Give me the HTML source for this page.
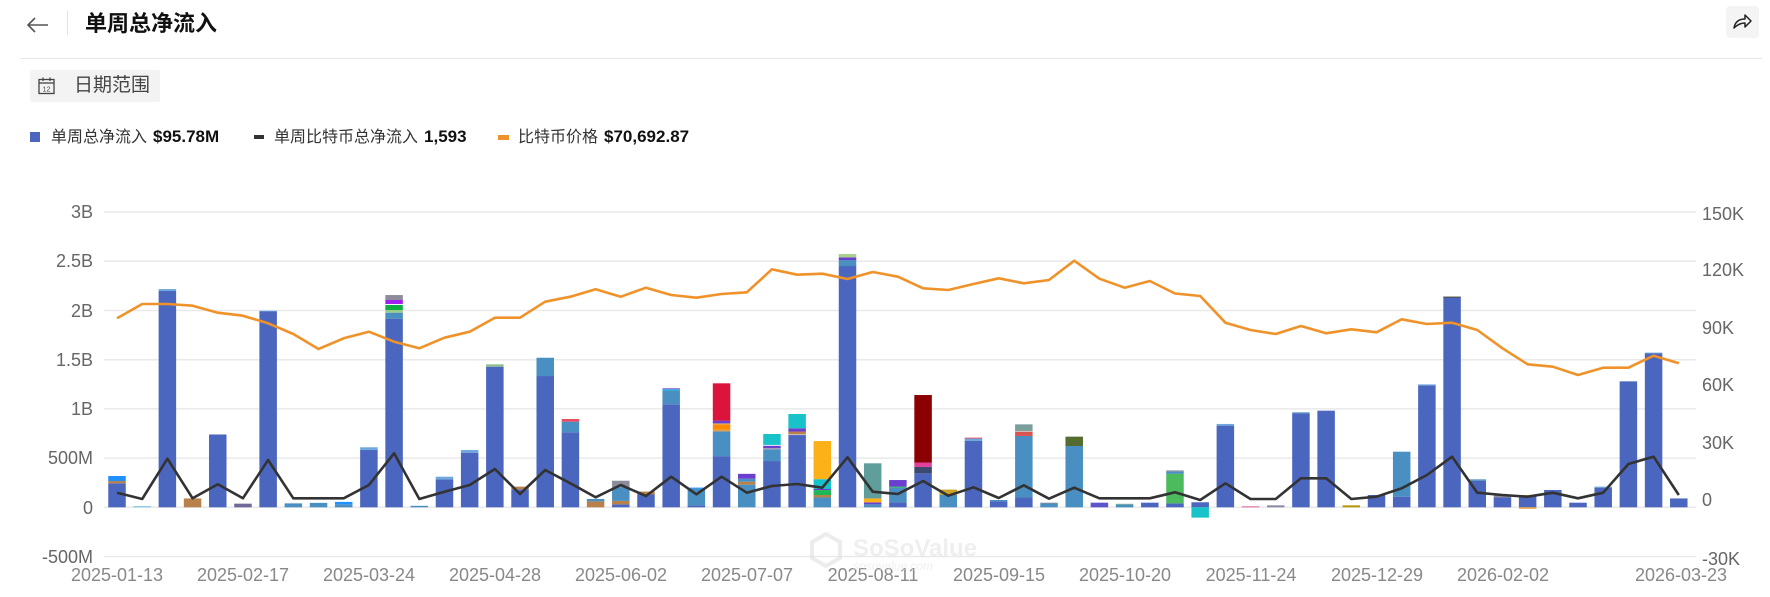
<!DOCTYPE html>
<html><head><meta charset="utf-8">
<style>
*{margin:0;padding:0;box-sizing:border-box}
body{width:1770px;height:597px;background:#fff;overflow:hidden;position:relative;font-family:"Liberation Sans","Noto Sans CJK SC",sans-serif;color:#222}
.abs{position:absolute}
.title{left:85px;top:8px;font-size:22px;font-weight:bold;color:#111;line-height:32px}
.hr{left:20px;top:58px;width:1742px;height:1px;background:#e6e6e6}
.btn{left:30px;top:70px;width:130px;height:32px;background:#f3f3f3;border-radius:2px}
.btn span{position:absolute;left:44px;top:5px;font-size:19px;color:#444;line-height:22px}
.share{left:1726px;top:6px;width:33px;height:32px;background:#f4f4f4;border-radius:4px}
.legend{top:126px;font-size:16px;line-height:22px;color:#333;white-space:nowrap}
.legend b{color:#111;font-size:17px;margin-left:6px}
.mk{position:absolute}
svg text{font-family:"Liberation Sans",sans-serif}
</style></head><body>
<svg class="abs" style="left:25px;top:14px" width="26" height="22" viewBox="0 0 26 22"><path d="M23 11H3M10 4L3 11L10 18" fill="none" stroke="#555" stroke-width="1.6"/></svg>
<div class="abs" style="left:67px;top:10px;width:1px;height:25px;background:#e3e3e3"></div>
<div class="abs title">单周总净流入</div>
<div class="abs share"><svg width="33" height="32" viewBox="0 0 33 32"><path d="M8 22C9 16 13 13 19 13V9L25 15L19 21V17C14 17 11 19 8 22Z" fill="none" stroke="#222" stroke-width="1.5" stroke-linejoin="round"/></svg></div>
<div class="abs hr"></div>
<div class="abs btn"><svg style="position:absolute;left:8px;top:7px" width="17" height="18" viewBox="0 0 17 18"><rect x="1" y="2.5" width="15" height="14" fill="none" stroke="#444" stroke-width="1.3"/><line x1="1" y1="6" x2="16" y2="6" stroke="#444" stroke-width="1.3"/><line x1="5" y1="0.5" x2="5" y2="4" stroke="#444" stroke-width="1.3"/><line x1="12" y1="0.5" x2="12" y2="4" stroke="#444" stroke-width="1.3"/><text x="8.5" y="14.5" font-size="7" text-anchor="middle" fill="#444">12</text></svg><span>日期范围</span></div>

<div class="abs legend" style="left:30px"><span class="mk" style="left:0;top:6px;width:10px;height:10px;background:#4b66be"></span><span style="margin-left:21px">单周总净流入</span><b>$95.78M</b></div>
<div class="abs legend" style="left:254px"><span class="mk" style="left:0;top:9px;width:10px;height:4px;background:#333"></span><span style="margin-left:20px">单周比特币总净流入</span><b>1,593</b></div>
<div class="abs legend" style="left:498px"><span class="mk" style="left:0;top:9px;width:11px;height:5px;background:#f0922a"></span><span style="margin-left:20px">比特币价格</span><b>$70,692.87</b></div>

<svg class="abs" style="left:0;top:0" width="1770" height="597" id="ch">
<g stroke="#e9e9e9" stroke-width="1.5">
<line x1="104" x2="1696" y1="212" y2="212"/><line x1="104" x2="1696" y1="261.2" y2="261.2"/><line x1="104" x2="1696" y1="310.5" y2="310.5"/><line x1="104" x2="1696" y1="359.7" y2="359.7"/><line x1="104" x2="1696" y1="408.9" y2="408.9"/><line x1="104" x2="1696" y1="458.1" y2="458.1"/><line x1="104" x2="1696" y1="507.3" y2="507.3"/><line x1="104" x2="1696" y1="556.5" y2="556.5"/>
</g>
<g font-size="18" fill="#666" text-anchor="end">
<text x="93" y="218">3B</text><text x="93" y="267">2.5B</text><text x="93" y="317">2B</text><text x="93" y="366">1.5B</text><text x="93" y="415">1B</text><text x="93" y="464">500M</text><text x="93" y="514">0</text><text x="93" y="563">-500M</text>
</g>
<g font-size="18" fill="#666">
<text x="1702" y="220">150K</text><text x="1702" y="276">120K</text><text x="1702" y="334">90K</text><text x="1702" y="391">60K</text><text x="1702" y="449">30K</text><text x="1702" y="506">0</text><text x="1702" y="565">-30K</text>
</g>
<g font-size="18" fill="#888" text-anchor="middle">
<text x="117" y="581">2025-01-13</text><text x="243" y="581">2025-02-17</text><text x="369" y="581">2025-03-24</text><text x="495" y="581">2025-04-28</text><text x="621" y="581">2025-06-02</text><text x="747" y="581">2025-07-07</text><text x="873" y="581">2025-08-11</text><text x="999" y="581">2025-09-15</text><text x="1125" y="581">2025-10-20</text><text x="1251" y="581">2025-11-24</text><text x="1377" y="581">2025-12-29</text><text x="1503" y="581">2026-02-02</text><text x="1681" y="581">2026-03-23</text>
</g>
<g id="bars"></g>
<g opacity="0.55">
<path d="M826 534L840 542V558L826 566L812 558V542Z" fill="none" stroke="#ddd" stroke-width="4"/>
<text x="853" y="556" font-size="24" font-weight="bold" fill="#e2e2e2">SoSoValue</text>
<text x="853" y="570" font-size="12" font-style="italic" fill="#e2e2e2">sosovalue.com</text>
</g>
<polyline id="pl" fill="none" stroke="#f0922a" stroke-width="2.6" stroke-linejoin="round"/>
<polyline id="bl" fill="none" stroke="#333" stroke-width="2.6" stroke-linejoin="round"/>
</svg>
<script>
var M='#4b66be',S='#4a8fc1',L='#6fa8dc',C='#17c3c8',P='#6a3fd0',R='#dc143c',O='#ff8c00',Y='#fbb117',G='#1db954',T='#b8804a',DR='#8b0000',TE='#5f9e9a',OL='#556b2f',GR='#8c8c9a',PK='#e0409a';
var D=[
[[.244,M],[.023,T],[.051,'#1e90ff']],[[.012,'#7ec8e3']],[[2.198,M],[.02,L]],[[.09,T]],[[.74,M]],[[.037,'#6f6a9a']],[[1.99,M],[.008,L]],[[.04,S]],[[.045,S]],[[.03,S],[.025,'#1e90ff']],
[[.582,M],[.028,L]],[[1.917,M],[.061,S],[.027,'#9acd8a'],[.051,'#0cb040'],[.01,'#fff'],[.041,'#a020f0'],[.05,GR]],[[.015,S]],[[.284,M],[.027,L]],[[.555,M],[.027,L]],[[1.429,M],[.024,'#8fbc8f']],[[.183,M],[.027,T]],[[1.334,M],[.186,S]],[[.762,M],[.108,S],[.027,'#e84a5f']],[[.06,T],[.025,S]],
[[.03,M],[.035,T],[.14,S],[.065,GR]],[[.13,M],[.03,T]],[[1.047,M],[.14,S],[.012,'#1ec8e8'],[.01,P]],[[.02,M],[.17,S],[.01,'#1e90ff']],[[.52,M],[.25,S],[.017,'#d4a060'],[.056,O],[.01,'#d4a060'],[.028,P],[.379,R]],[[.23,S],[.03,T],[.03,S],[.05,P]],[[.47,M],[.12,S],[.01,'#aaa'],[.027,P],[.007,'#fff'],[.111,C]],[[.735,M],[.007,'#ccc'],[.028,T],[.033,P],[.145,C]],[[.1,S],[.025,T],[.05,G],[.011,P],[.1,C],[.387,Y]],[[2.452,M],[.061,S],[.027,P],[.034,'#a8d08d']],
[[.03,S],[.02,P],[.04,Y],[.357,TE]],[[.05,M],[.15,S],[.01,G],[.067,P]],[[.345,M],[.065,'#3c4a6e'],[.045,PK],[.686,DR]],[[.125,S],[.055,'#c9a227']],[[.674,M],[.025,L],[.009,'#e84a5f']],[[.06,M],[.014,S]],[[.1,M],[.625,S],[.044,'#d9534f'],[.007,'#ccc'],[.067,'#7a9e9a']],[[.04,S],[.007,GR]],[[.623,S],[.095,OL]],[[.047,'#5a55c8']],
[[.03,S],[.006,'#8fbc8f']],[[.047,M]],[[.04,M],[.3,'#4cbb5e'],[.025,S],[.01,GR]],[[.051,M]],[[.83,M],[.017,L]],[[.01,'#e0609a']],[[.02,'#8a8aa8']],[[.955,M],[.01,S]],[[.982,M]],[[.02,'#b8960c']],
[[.125,M]],[[.108,M],[.457,S]],[[1.24,M],[.009,L]],[[2.13,M],[.011,'#333']],[[.27,M],[.014,S]],[[.1,M],[.025,GR]],[[.115,M],[.01,Y]],[[.176,M]],[[.047,M]],[[.2,M],[.01,L]],
[[1.28,M]],[[1.565,M],[.007,L]],[[.09,M]]];
var priceY=[318.3,304,304,305.7,312.7,315.7,323.3,334,349,338.3,331.7,341.7,348.3,337.7,331.7,317.7,317.7,301.7,296.7,289.3,296.7,287.7,295,297.7,294,292.3,269.3,274.7,273.7,279,272,276.7,288.3,290,284,278.3,283.3,280,260.7,278.7,287.7,281,293.5,296,322.7,330,334,326,333.3,329.3,332.3,319.3,324,322.7,330,348.3,364.3,366.7,375,367.7,367.7,355.7,363.3];
var blackY=[492.7,499,458.7,498.3,484.3,498.3,460,498.3,498.3,498.3,485,453.3,499,491.7,485,469,494,470,483.3,497.3,485,496,476.7,494.3,476.7,492.7,486,484,487.7,457.3,491.7,494,481,495.7,487.3,498,485.3,498.7,487.7,498.3,498.3,498.3,492.3,500,483.3,499,499,478.3,478.3,499,496.7,488.3,475,456.7,492.7,495,496.7,492.7,498.3,492.7,464,456.7,495];
var NS='http://www.w3.org/2000/svg',g=document.getElementById('bars'),z=507.3,k=98.4;
function rect(x,y,h,c){var r=document.createElementNS(NS,'rect');r.setAttribute('x',x);r.setAttribute('y',y);r.setAttribute('width',17.5);r.setAttribute('height',Math.max(h,0.8));r.setAttribute('fill',c);g.appendChild(r);}
var pp=[],bp=[];
for(var i=0;i<63;i++){var cx=117+25.19*i,x=cx-8.75,acc=0;
 D[i].forEach(function(s){var y0=z-(acc+s[0])*k;rect(x,y0,s[0]*k,s[1]);acc+=s[0];});
 pp.push(cx.toFixed(1)+','+priceY[i]);bp.push(cx.toFixed(1)+','+blackY[i]);}
rect(117+25.19*43-8.75,z,0.105*k,C);
rect(117+25.19*56-8.75,z,1.5,'#e8a040');
document.getElementById('pl').setAttribute('points',pp.join(' '));
document.getElementById('bl').setAttribute('points',bp.join(' '));
</script>
</body></html>
